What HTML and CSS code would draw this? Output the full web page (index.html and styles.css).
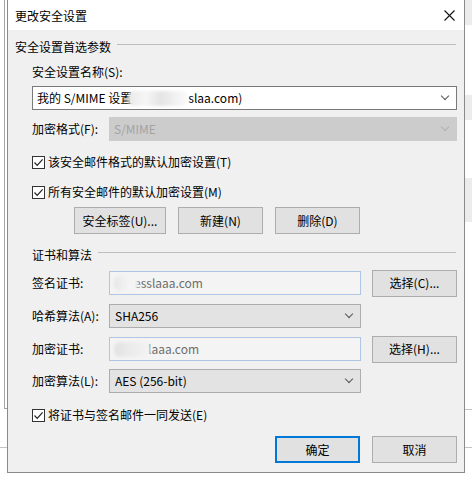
FILE: index.html
```html
<!DOCTYPE html>
<html lang="zh-CN">
<head>
  <meta charset="UTF-8">
  <title>更改安全设置</title>
  <link rel="stylesheet" href="styles.css">
</head>
<body>

  <div class="dialog">
    <div class="titlebar">
      <span class="title">更改安全设置</span>
      <svg class="close" width="11" height="11" viewBox="0 0 11 11">
        <path d="M0.5 0.5 L10.5 10.5 M10.5 0.5 L0.5 10.5" stroke="#111" stroke-width="1.1" fill="none"/>
      </svg>
    </div>

    <div class="content">
      <div class="group-title first">安全设置首选参数</div>

      <div class="indent">
        <div class="label-row">安全设置名称(S):</div>
        <div class="combo edit wide">
          <span class="value">我的 S/MIME 设置<span class="blob b1"></span>slaa.com)</span>
          <span class="chev"></span>
        </div>

        <div class="row r2">
          <span class="lbl">加密格式(F):</span>
          <div class="combo disabled">
            <span class="value">S/MIME</span>
            <span class="chev"></span>
          </div>
        </div>

        <label class="check c1"><span class="box"><svg width="11" height="11" viewBox="0 0 11 11"><path d="M1.5 5.5 L4.2 8.3 L9.6 2.4" stroke="#222" stroke-width="1.2" fill="none"/></svg></span>该安全邮件格式的默认加密设置(T)</label>
        <label class="check c2"><span class="box"><svg width="11" height="11" viewBox="0 0 11 11"><path d="M1.5 5.5 L4.2 8.3 L9.6 2.4" stroke="#222" stroke-width="1.2" fill="none"/></svg></span>所有安全邮件的默认加密设置(M)</label>

        <div class="btn-row">
          <button class="btn w92">安全标签(U)...</button>
          <button class="btn">新建(N)</button>
          <button class="btn">删除(D)</button>
        </div>

        <div class="group-title second">证书和算法</div>

        <div class="row cert r-sign">
          <span class="lbl">签名证书:</span>
          <div class="field"><span class="blob b2"></span>esslaaa.com</div>
          <button class="btn">选择(C)...</button>
        </div>

        <div class="row cert r-hash">
          <span class="lbl">哈希算法(A):</span>
          <div class="combo list">
            <span class="value">SHA256</span>
            <span class="chev"></span>
          </div>
        </div>

        <div class="row cert r-enc">
          <span class="lbl">加密证书:</span>
          <div class="field"><span class="blob b3"></span>laaa.com</div>
          <button class="btn">选择(H)...</button>
        </div>

        <div class="row cert r-alg">
          <span class="lbl">加密算法(L):</span>
          <div class="combo list">
            <span class="value">AES (256-bit)</span>
            <span class="chev"></span>
          </div>
        </div>

        <label class="check c3"><span class="box"><svg width="11" height="11" viewBox="0 0 11 11"><path d="M1.5 5.5 L4.2 8.3 L9.6 2.4" stroke="#222" stroke-width="1.2" fill="none"/></svg></span>将证书与签名邮件一同发送(E)</label>
      </div>

      <div class="footer">
        <button class="btn default">确定</button>
        <button class="btn">取消</button>
      </div>
    </div>
  </div>

</body>
</html>
```

FILE: styles.css
```css
html, body {
  height: 100%;
}

body {
  margin: 0;
  font-family: "Noto Sans CJK SC", "Noto Sans", sans-serif;
  font-size: 12px;
  color: #000;
  overflow: hidden;
  background:
    linear-gradient(#a3a3a3, #a3a3a3) 4px 0 / 1px 409px no-repeat,
    linear-gradient(#a3a3a3, #a3a3a3) 4px 408px / 3px 1px no-repeat,
    linear-gradient(#c4c4c4, #c4c4c4) 0 447px / 7px 1px no-repeat,
    linear-gradient(#c4c4c4, #c4c4c4) right 0 top 447px / 7px 1px no-repeat,
    linear-gradient(#c4c4c4, #c4c4c4) right 0 top 409px / 7px 1px no-repeat,
    linear-gradient(#ececec, #ececec) right 0 top 0 / 7px 25px no-repeat,
    linear-gradient(#ececec, #ececec) right 0 top 95px / 7px 25px no-repeat,
    linear-gradient(#ececec, #ececec) right 0 top 178px / 7px 44px no-repeat,
    #fff;
}

.dialog {
  box-sizing: border-box;
  width: 458px;
  height: 474px;
  margin: -1px 0 0 7px;
  border: 1px solid #8a8a8a;
  background: #f0f0f0;
  display: flex;
  flex-direction: column;
}

.titlebar {
  height: 30px;
  background: #fff;
  display: flex;
  align-items: center;
  justify-content: space-between;
  padding: 0 9px 0 7px;
}

.title {
  line-height: 16px;
  margin-top: 1px;
}

.close {
  display: block;
  margin-top: 1px;
}

.content {
  padding: 0 7px;
  line-height: 16px;
}

.group-title {
  display: flex;
  align-items: center;
  height: 16px;
  white-space: nowrap;
}

.group-title::after {
  content: "";
  flex: 1;
  height: 1px;
  background: #bdbdbd;
  margin-bottom: 5px;
  margin-left: 6px;
  margin-right: 1px;
}

.group-title.first {
  margin-top: 9px;
}

.group-title.second {
  margin-top: 13px;
}

.indent {
  padding-left: 17px;
}

.label-row {
  margin-top: 9px;
}

.combo {
  box-sizing: border-box;
  height: 24px;
  border: 1px solid #7a7a7a;
  display: flex;
  align-items: center;
  justify-content: space-between;
  padding: 0 8px 0 4px;
  background: #fff;
}

.combo.wide {
  margin-top: 6px;
  width: 425px;
}

.combo.disabled {
  width: 348px;
  background: #cccccc;
  border-color: #cccccc;
  color: #a3a3a3;
}

.combo.list {
  width: 252px;
  background: #e3e3e3;
  border-color: #adadad;
  padding-left: 5px;
}

.value {
  display: flex;
  align-items: center;
  white-space: nowrap;
}

.chev {
  width: 5px;
  height: 5px;
  border-right: 1px solid #555;
  border-bottom: 1px solid #555;
  transform: rotate(45deg);
  margin-top: -4px;
}

.disabled .chev {
  border-color: #b0b0b0;
}

.blob {
  display: inline-block;
  height: 15px;
  border-radius: 6px;
  filter: blur(1.5px);
}

.b1 {
  width: 60px;
  margin: 0 0 0 -4px;
  background: linear-gradient(90deg, #e9e9e9 0%, #f6f6f6 30%, #e4e4e4 55%, #f2f2f2 80%, #fafafa 100%);
}

.b2 {
  width: 24px;
  margin-right: -4px;
  background: linear-gradient(90deg, #e6e6e6, #f4f4f4 60%, #f3f3f3);
}

.b3 {
  width: 36px;
  margin-right: -2px;
  background: linear-gradient(90deg, #e2e2e2, #ececec 50%, #f3f3f3);
}

.row {
  display: flex;
  align-items: center;
}

.lbl {
  width: 77px;
  flex: none;
  white-space: nowrap;
}

.row.r2 {
  margin-top: 7px;
  height: 24px;
}

.row.cert {
  height: 28px;
}

.r-sign { margin-top: 6px; }
.r-hash { margin-top: 5px; }
.r-enc { margin-top: 5px; }
.r-alg { margin-top: 4px; }

.field {
  box-sizing: border-box;
  width: 252px;
  height: 24px;
  margin-right: 11px;
  border: 1px solid #aec6e4;
  background: #f4f4f4;
  color: #6d6d6d;
  display: flex;
  align-items: center;
  padding-left: 4px;
}

.check {
  display: flex;
  align-items: center;
  height: 16px;
}

.box {
  box-sizing: border-box;
  width: 13px;
  height: 13px;
  border: 1px solid #333;
  background: #fff;
  margin-right: 3px;
  display: flex;
  align-items: center;
  justify-content: center;
}

.box svg {
  display: block;
}

.c1 { margin-top: 13px; }
.c2 { margin-top: 14px; }
.c3 { margin-top: 12px; }

.btn-row {
  display: flex;
  gap: 12px;
  margin: 7px 0 0 42px;
}

.btn {
  box-sizing: border-box;
  width: 85px;
  height: 27px;
  border: 1px solid #adadad;
  background: #e1e1e1;
  font: inherit;
  color: #000;
  padding: 0;
  line-height: 16px;
}

.btn.w92 {
  width: 92px;
}

.btn.default {
  border: 2px solid #0078d7;
}

.footer {
  display: flex;
  justify-content: flex-end;
  gap: 12px;
  margin-top: 13px;
}
```
